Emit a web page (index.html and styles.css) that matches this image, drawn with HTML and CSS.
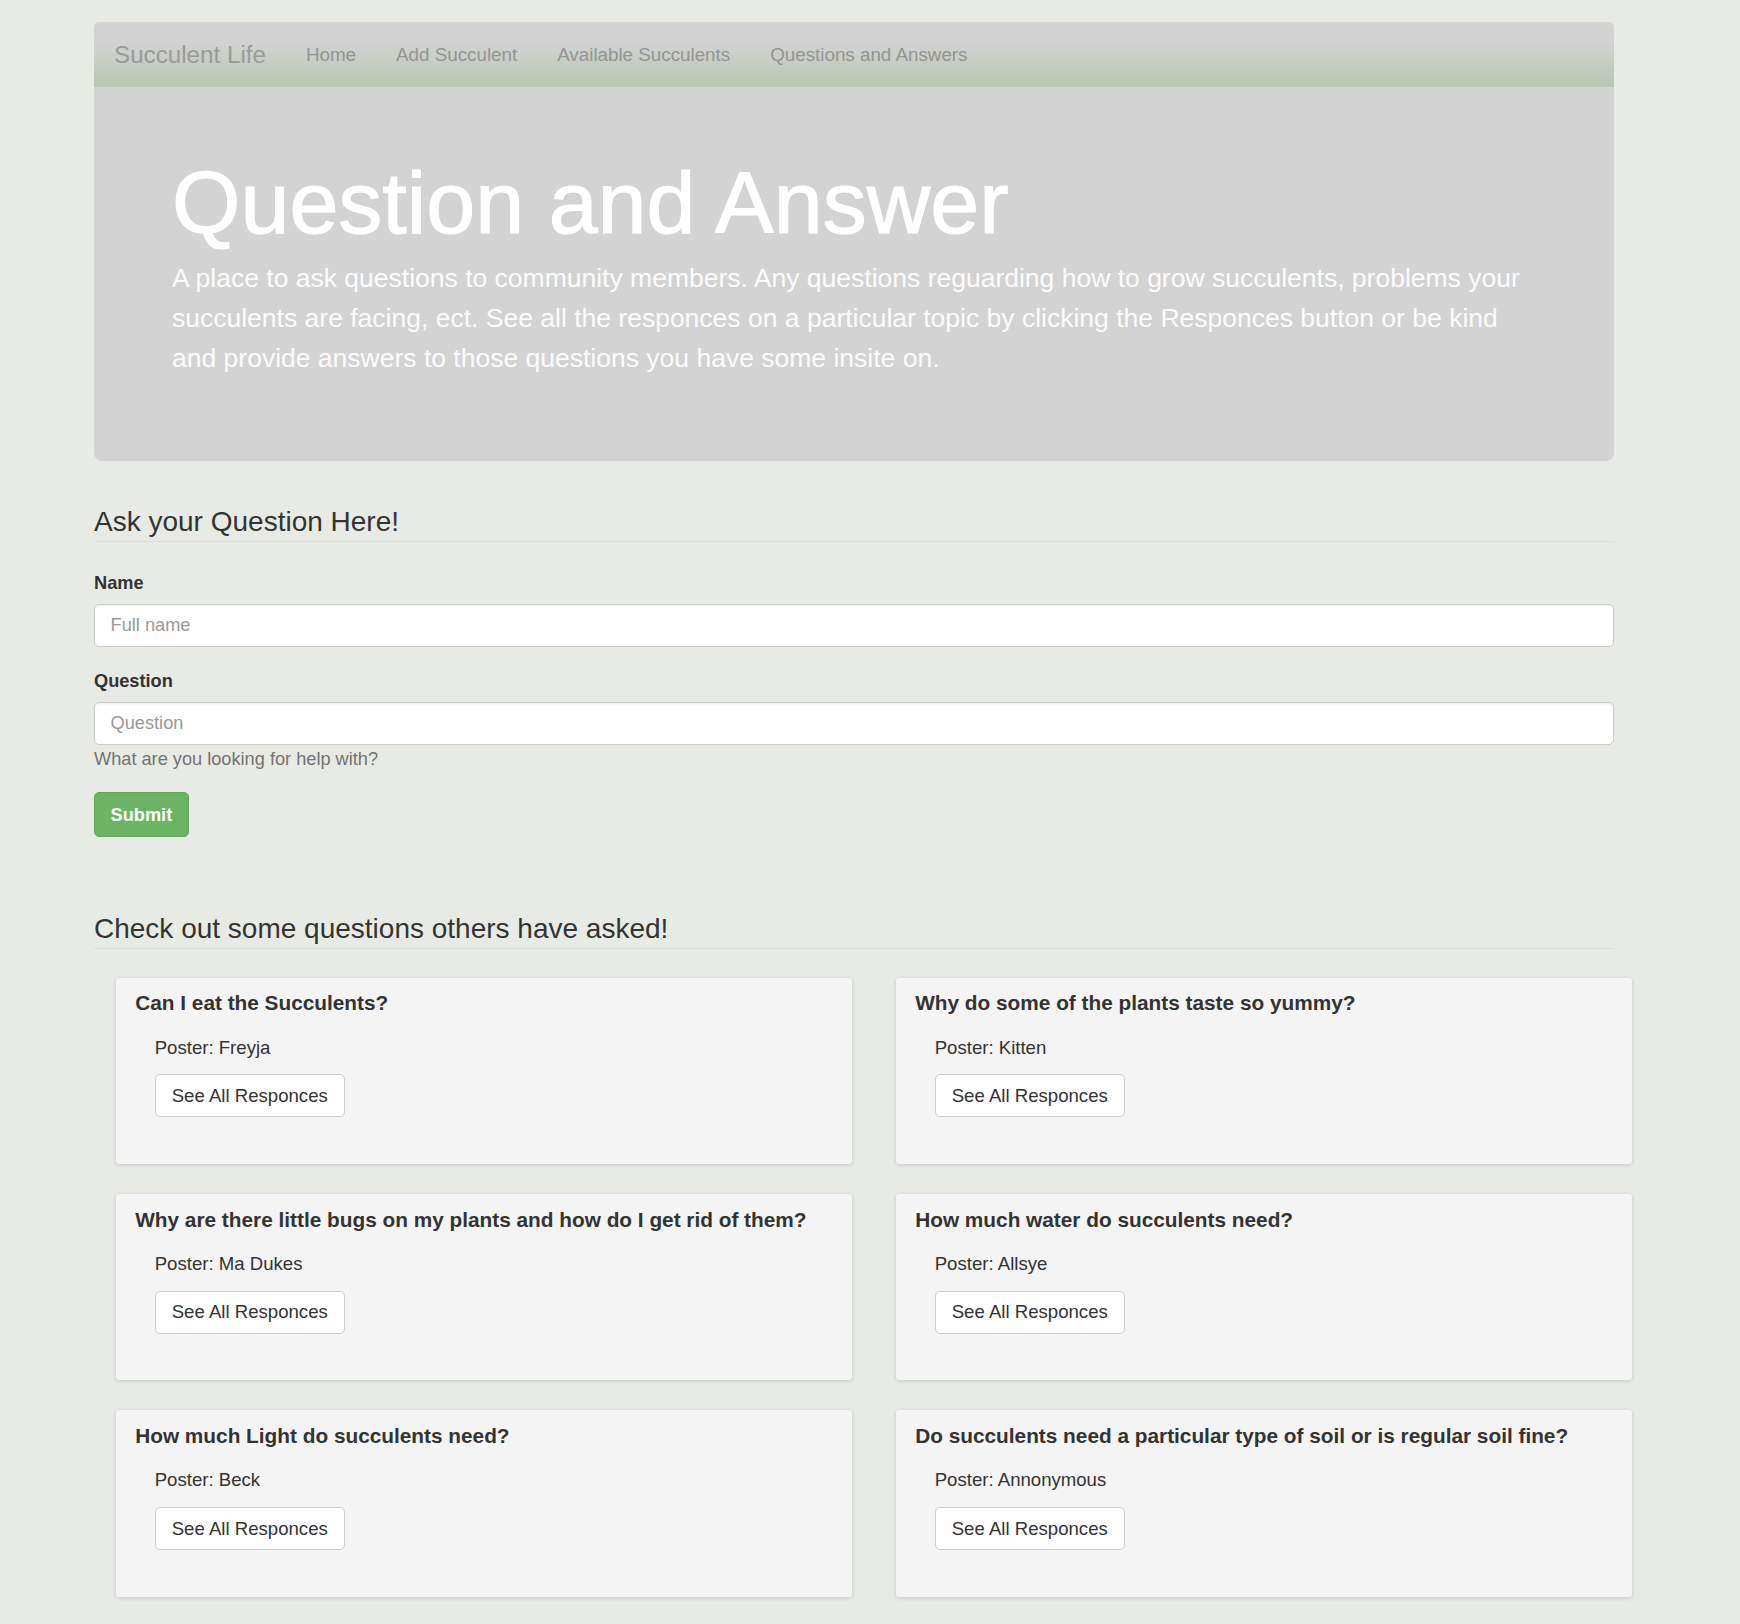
FILE: index.html
```html
<!DOCTYPE html>
<html lang="en">
<head>
<meta charset="utf-8">
<title>Question and Answer - Succulent Life</title>
<link rel="stylesheet" href="styles.css">
</head>
<body>
<div class="page">
  <nav class="navbar">
    <a class="brand" href="#">Succulent Life</a>
    <a class="nav-link" href="#">Home</a>
    <a class="nav-link" href="#">Add Succulent</a>
    <a class="nav-link" href="#">Available Succulents</a>
    <a class="nav-link" href="#">Questions and Answers</a>
  </nav>
  <header class="jumbotron">
    <h1>Question and Answer</h1>
    <p>A place to ask questions to community members. Any questions reguarding how to grow succulents, problems your succulents are facing, ect. See all the responces on a particular topic by clicking the Responces button or be kind and provide answers to those questions you have some insite on.</p>
  </header>

  <form class="ask-form">
    <div class="legend">Ask your Question Here!</div>
    <div class="form-group">
      <label class="label">Name</label>
      <input class="input" type="text" placeholder="Full name">
    </div>
    <div class="form-group">
      <label class="label">Question</label>
      <input class="input" type="text" placeholder="Question">
      <div class="help">What are you looking for help with?</div>
    </div>
    <button class="btn-submit" type="button">Submit</button>
  </form>

  <section class="questions">
    <div class="legend">Check out some questions others have asked!</div>
    <div class="cards">
      <div class="card">
        <h4 class="card-title">Can I eat the Succulents?</h4>
        <div class="card-body">
          <p class="poster">Poster: Freyja</p>
          <button class="btn-default" type="button">See All Responces</button>
        </div>
      </div>
      <div class="card">
        <h4 class="card-title">Why do some of the plants taste so yummy?</h4>
        <div class="card-body">
          <p class="poster">Poster: Kitten</p>
          <button class="btn-default" type="button">See All Responces</button>
        </div>
      </div>
      <div class="card">
        <h4 class="card-title">Why are there little bugs on my plants and how do I get rid of them?</h4>
        <div class="card-body">
          <p class="poster">Poster: Ma Dukes</p>
          <button class="btn-default" type="button">See All Responces</button>
        </div>
      </div>
      <div class="card">
        <h4 class="card-title">How much water do succulents need?</h4>
        <div class="card-body">
          <p class="poster">Poster: Allsye</p>
          <button class="btn-default" type="button">See All Responces</button>
        </div>
      </div>
      <div class="card">
        <h4 class="card-title">How much Light do succulents need?</h4>
        <div class="card-body">
          <p class="poster">Poster: Beck</p>
          <button class="btn-default" type="button">See All Responces</button>
        </div>
      </div>
      <div class="card">
        <h4 class="card-title">Do succulents need a particular type of soil or is regular soil fine?</h4>
        <div class="card-body">
          <p class="poster">Poster: Annonymous</p>
          <button class="btn-default" type="button">See All Responces</button>
        </div>
      </div>
    </div>
  </section>
</div>
</body>
</html>
```

FILE: styles.css
```css
* { box-sizing: border-box; }

html, body {
  margin: 0;
  padding: 0;
  background: #e8ebe5;
}

body {
  font-family: "Liberation Sans", Arial, Helvetica, sans-serif;
  font-size: 18.2px;
  line-height: 26px;
  color: #333;
}

.page {
  width: 1520px;
  margin: 0 126px 0 94px;
  padding: 22px 0 28px;
}

/* Navbar */
.navbar {
  display: flex;
  align-items: center;
  gap: 40px;
  height: 65px;
  padding-left: 20px;
  border-radius: 5px 5px 0 0;
  background: linear-gradient(to bottom, #d3d3d3 0%, #d1d2d1 35%, #b9c7b1 100%);
}

.brand {
  font-size: 24.2px;
  color: #9a9a9a;
  text-decoration: none;
}

.nav-link {
  font-size: 18.8px;
  color: #949494;
  text-decoration: none;
}

/* Jumbotron */
.jumbotron {
  background: #d3d3d3;
  border-radius: 0 0 8px 8px;
  padding: 68px 78px 83px 78px;
  color: #fff;
}

.jumbotron h1 {
  margin: 0 0 7px;
  font-size: 88px;
  line-height: 95.7px;
  font-weight: normal;
  color: #fff;
  -webkit-text-stroke: 1.2px #fff;
}

.jumbotron p {
  margin: 0;
  font-size: 26.5px;
  line-height: 40px;
  font-weight: 300;
  color: #fbfbfb;
}

/* Form */
.ask-form {
  margin-top: 41.5px;
}

.legend {
  font-size: 28px;
  line-height: 39px;
  color: #333;
  border-bottom: 1px solid #dcdfd9;
  margin-bottom: 28px;
}

.form-group {
  margin-bottom: 21px;
}

.label {
  display: block;
  font-weight: bold;
  font-size: 18.2px;
  line-height: 26px;
  margin-bottom: 8px;
}

.input {
  display: block;
  width: 100%;
  height: 43px;
  padding: 7px 15.6px;
  font-family: "Liberation Sans", Arial, Helvetica, sans-serif;
  font-size: 18.2px;
  color: #555;
  background: #fff;
  border: 1px solid #ccc;
  border-radius: 5px;
  box-shadow: inset 0 1px 2px rgba(0, 0, 0, 0.08);
}

.input::placeholder {
  color: #999;
}

.help {
  margin-top: 1px;
  color: #737373;
  font-size: 18.2px;
  line-height: 26px;
}

.btn-submit {
  display: block;
  font-family: "Liberation Sans", Arial, Helvetica, sans-serif;
  font-size: 18.2px;
  line-height: 26px;
  font-weight: bold;
  color: #fff;
  background: #6bb465;
  border: 1px solid #5faa59;
  border-radius: 5px;
  padding: 8.5px 15.6px;
  margin-top: -1px;
}

/* Questions */
.questions {
  margin-top: 72px;
}

.questions .legend {
  margin-bottom: 28.7px;
}

.cards {
  display: grid;
  grid-template-columns: 736px 736px;
  column-gap: 44px;
  row-gap: 30px;
  margin-left: 21.7px;
}

.card {
  background: #f4f4f4;
  border-radius: 3px;
  box-shadow: 0 1px 4px rgba(0, 0, 0, 0.16);
  padding: 13.5px 19.5px 46.7px;
}

.card-title {
  margin: 0 0 20.4px;
  font-size: 20.8px;
  line-height: 23.1px;
  font-weight: bold;
  color: #333;
}

.card-body {
  padding-left: 19.5px;
}

.poster {
  margin: 0 0 13.6px;
  font-size: 18.6px;
  line-height: 26px;
}

.btn-default {
  display: inline-block;
  font-family: "Liberation Sans", Arial, Helvetica, sans-serif;
  font-size: 18.6px;
  line-height: 26px;
  color: #333;
  background: #fff;
  border: 1px solid #ccc;
  border-radius: 5px;
  padding: 7.5px 16px;
}
```
